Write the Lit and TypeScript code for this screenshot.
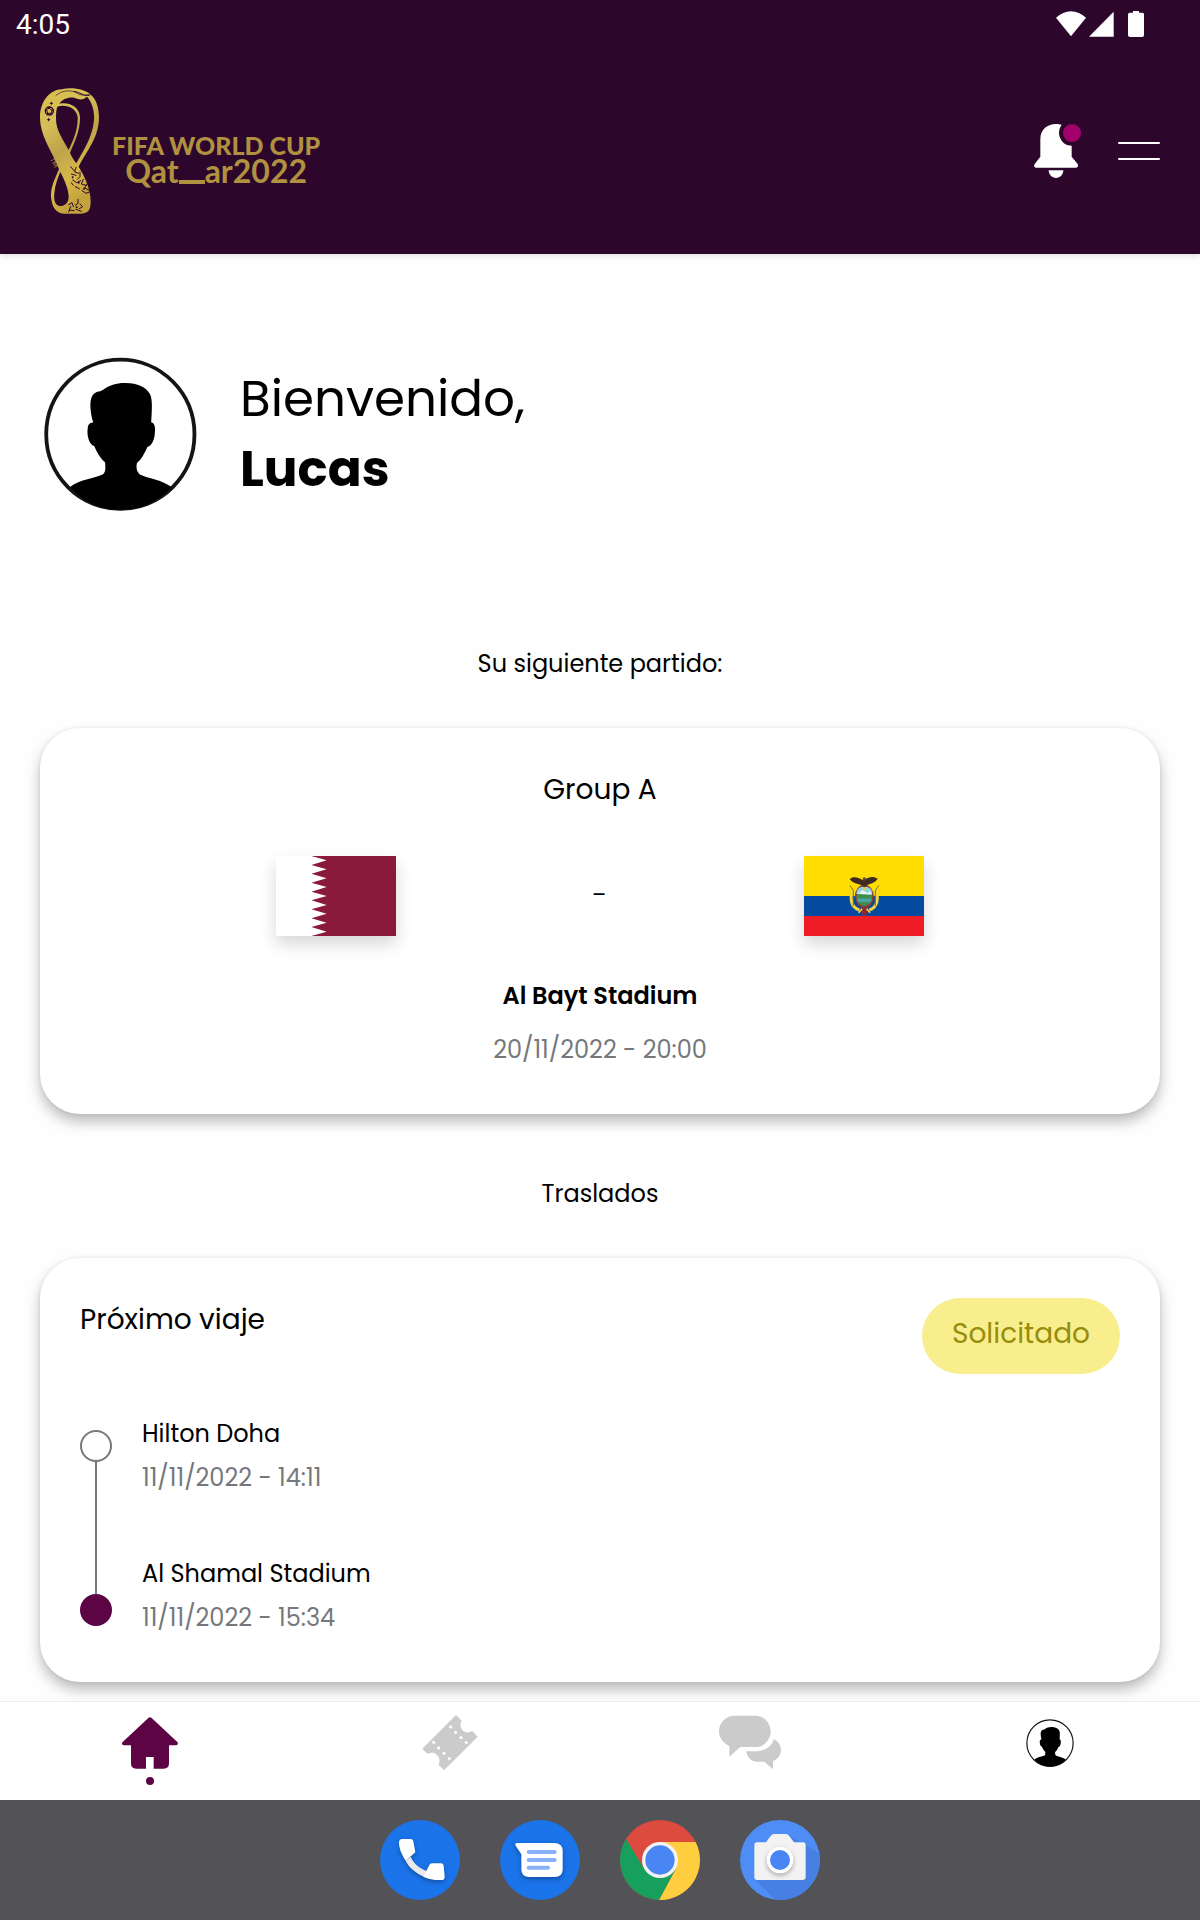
import { LitElement, html, svg, css } from "lit";
import { customElement, property } from "lit/decorators.js";

const PLUM = "#5c0444";
const MUTED = "#cbcbcb";

/* ---------- Status bar ---------- */

@customElement("status-bar")
class StatusBar extends LitElement {
  static styles = css`
    :host {
      display: flex;
      align-items: center;
      justify-content: space-between;
      height: 48px;
      padding: 0 56px 0 16px;
      color: #fff;
      font: 400 28px/48px Roboto, sans-serif;
    }
    time {
      padding-top: 2px;
    }
    .icons {
      display: block;
      width: 88px;
      height: 26px;
      fill: #fff;
    }
  `;
  render() {
    return html`
      <time>4:05</time>
      <svg class="icons" viewBox="168 33 264 78" aria-hidden="true">
        <path d="M168 53C195 27 231 27 258 53L213 109Z" />
        <path d="M267 110L341 35V110Z" />
        <path d="M399 33H417V38H428Q432 39 432 43V106Q431 111 427 111H389Q384 110 384 106V43Q385 38 389 38H399Z" />
      </svg>
    `;
  }
}

/* ---------- Header ---------- */

@customElement("cup-logo")
class CupLogo extends LitElement {
  static styles = css`
    :host {
      display: flex;
      gap: 13px;
      color: #b0913f;
    }
    .emblem {
      display: block;
      width: 59px;
      height: 126px;
    }
    .words {
      display: flex;
      flex-direction: column;
      align-items: center;
      padding-top: 43px;
    }
    .name {
      font: 900 25px/28px Lato, sans-serif;
      white-space: nowrap;
    }
    .host-city {
      display: flex;
      font: 700 32px/24px Lato, sans-serif;
    }
    .stretch {
      width: 26px;
      height: 4px;
      margin-top: 21px;
      background: currentColor;
    }
    .tm {
      font: 400 20px Lato, sans-serif;
      fill: #b0913f;
    }
  `;
  render() {
    return html`
      <svg class="emblem" viewBox="120 264 177 378" aria-hidden="true">
        <defs>
          <linearGradient id="gold" x1="0" y1="0" x2="0.35" y2="1">
            <stop offset="0" stop-color="#d9c04a" />
            <stop offset="0.3" stop-color="#d6bf58" />
            <stop offset="0.55" stop-color="#bfa24a" />
            <stop offset="0.8" stop-color="#d6ba48" />
            <stop offset="1" stop-color="#c3a23c" />
          </linearGradient>
        </defs>
        <path
          fill="url(#gold)"
          fill-rule="evenodd"
          d="M120 352C120 304 150 268 186 268C214 260 258 268 272 284C288 296 297 322 297 352C297 412 262 450 236 500C255 530 272 570 272 604C272 630 266 641 240 641H192C165 640 153 615 153 585C153 560 165 535 177 508C160 460 120 410 120 352Z
             M172 320C195 312 230 322 233 352C234 390 220 420 206 450C190 420 168 392 168 357C168 340 169 328 172 320Z
             M178 311C190 293 216 287 234 297C248 301 256 294 261 290C275 305 284 330 282 360C278 410 250 452 229 490C222 482 214 468 210 458C225 425 241 390 240 350C237 318 205 305 178 311Z
             M181 516C196 545 206 570 206 592C205 612 190 620 178 618C165 614 161 600 163 580C165 555 173 535 181 516Z"
        />
        <g fill="none" stroke="#2d062c" stroke-linecap="round">
          <path stroke-width="2" d="M168 286C190 268 216 270 232 280C246 288 258 286 270 282" />
          <path stroke-width="3" d="M222 274C240 276 250 290 268 286" />
          <circle cx="148" cy="333" r="12" stroke-width="4" />
          <path stroke-width="3" d="M148 325L156 331L153 340H143L140 331ZM148 321V325M160 329L156 331M155 345L153 340M141 345L143 340M136 329L140 331" />
          <path
            stroke-width="3"
            d="M212 500L222 512M228 502L224 516L236 520M214 522L228 526M240 516V530L232 538M218 540L230 548L242 542M250 538L244 552L258 556M226 560L238 566M262 550L254 564L266 570M246 572L258 580L268 576M214 548L220 556"
          />
          <path stroke-width="3" d="M206 614L216 608L220 620M234 598V610L226 616M208 630L222 632M240 612L248 620L238 626M228 628L244 634M212 620L206 636" />
        </g>
        <g fill="#2d062c">
          <path d="M154 304L156 308L160 310L156 312L154 316L152 312L148 310L152 308Z" />
          <path d="M146 353L148 357L152 359L148 361L146 365L144 361L140 359L144 357Z" />
          <circle cx="236" cy="548" r="3" />
          <circle cx="218" cy="532" r="3" />
          <circle cx="252" cy="566" r="3" />
          <circle cx="230" cy="622" r="3" />
        </g>
        <text class="tm" transform="translate(149 478) rotate(62)">TM</text>
      </svg>
      <div class="words">
        <span class="name">FIFA WORLD CUP</span>
        <span class="host-city"><span>Qat</span><i class="stretch"></i><span>ar2022</span></span>
      </div>
    `;
  }
}

@customElement("app-header")
class AppHeader extends LitElement {
  static styles = css`
    :host {
      display: block;
      background: #2d062c;
      box-shadow: 0 2px 6px rgba(0, 0, 0, 0.12);
    }
    .bar {
      display: flex;
      align-items: center;
      justify-content: space-between;
      padding: 40px;
    }
    .actions {
      display: flex;
      align-items: center;
      gap: 37px;
    }
    button {
      display: block;
      padding: 0;
      border: 0;
      background: none;
    }
    svg {
      display: block;
    }
    .bell {
      width: 47px;
      height: 54px;
    }
    .menu {
      width: 42px;
      height: 18px;
    }
  `;
  render() {
    return html`
      <status-bar></status-bar>
      <div class="bar">
        <cup-logo></cup-logo>
        <div class="actions">
          <button aria-label="Notificaciones">
            <svg class="bell" viewBox="102 372 141 162" aria-hidden="true">
              <path
                fill="#fff"
                d="M121 417C121 388 143 372 168 372C175 372 180 373 185 375C175 388 175 404 182 417C188 430 200 437 215 437V470L233 492C236 498 233 503 228 503H108C102 503 101 497 104 492L121 470Z"
              />
              <path fill="#fff" d="M146 511H190C190 524 180 534 168 534S146 524 146 511Z" />
              <circle cx="216" cy="399" r="27" fill="#a2006c" />
            </svg>
          </button>
          <button aria-label="Menú">
            <svg class="menu" viewBox="0 0 42 18" aria-hidden="true">
              <path stroke="#fff" stroke-width="2" stroke-linecap="round" d="M1 1H41M1 17H41" />
            </svg>
          </button>
        </div>
      </div>
    `;
  }
}

/* ---------- Avatar ---------- */

const avatarShape = svg`
  <ellipse cx="290" cy="282" rx="214" ry="224" fill="#fff" stroke="#141414" stroke-width="11" />
  <path d="M205 215C202 188 203 166 218 157C224 152 234 154 240 148C258 135 278 128 302 128C338 127 364 140 375 160C384 175 381 215 379 246C390 249 392 262 389 285C386 305 378 318 368 320C360 340 350 358 338 368C335 380 337 396 348 403C375 416 410 418 438 440C400 485 350 508 290 508C230 508 183 485 145 440C170 418 215 415 240 402C250 394 246 375 246 366C232 355 222 335 215 318C200 312 192 285 196 262C197 250 206 247 212 246C208 235 206 225 205 215Z" />
`;

/* ---------- Match card ---------- */

const serratedEdge = Array.from({ length: 9 }, (_, i) => {
  const step = 240 / 9;
  return `L152 ${Math.round((i + 0.5) * step)}L106 ${Math.round((i + 1) * step)}`;
}).join("");

const qatarFlag = svg`
  <rect width="360" height="240" fill="#fff" />
  <path fill="#8a1a3b" d="M106 0${serratedEdge}V240H360V0Z" />
`;

const ecuadorFlag = svg`
  <rect width="360" height="240" fill="#fd0" />
  <rect y="120" width="360" height="60" fill="#044a9f" />
  <rect y="180" width="360" height="60" fill="#ee1c25" />
  <g transform="translate(-102 -108)">
    <path fill="none" stroke="#f6d63a" stroke-width="9" d="M247 206C240 235 242 262 268 270M317 206C326 235 324 262 298 270" />
    <path fill="none" stroke="#7a7030" stroke-width="3" d="M240 196L250 212V258M326 196L316 212V258" />
    <path fill="#8a2a30" d="M272 260H296L288 288H278Z" />
    <path fill="none" stroke="#f6d63a" stroke-width="5" d="M266 278L276 266M300 278L290 266" />
    <ellipse cx="283" cy="229" rx="26" ry="32" fill="#3c8f4c" stroke="#8c3a3a" stroke-width="5" />
    <path fill="#8fd4e6" d="M259 222C260 205 270 200 283 200S306 205 307 222Z" />
    <path fill="#e9f4ee" d="M264 222L278 210L292 220L300 214L306 224Z" />
    <path fill="#4aa6a4" d="M260 236H306L302 246H264Z" />
    <circle cx="283" cy="206" r="5" fill="#f4c92b" />
    <path fill="#3f2a22" d="M239 177C253 166 268 176 280 181C294 172 308 166 323 176C314 190 302 190 292 195L283 202L274 195C260 191 247 189 239 177Z" />
    <circle cx="283" cy="177" r="5" fill="#5a4a42" />
  </g>
`;

/* ---------- Navigation and dock icons ---------- */

const homeIcon = svg`
  <svg viewBox="114 102 192 216">
    <g fill=${PLUM}>
      <path d="M205 114Q210 109 215 114L292 186Q297 194 288 196H267V250Q267 266 251 266H221V231H198V266H168Q153 266 153 250V196H132Q122 194 128 186Z" />
      <circle cx="210" cy="303" r="12" />
    </g>
  </svg>
`;

const ticketIcon = svg`
  <svg viewBox="1014 102 192 216">
    <path fill=${MUTED} d="M1128 105L1145 122C1139 133 1141 144 1149 152C1157 159 1167 159 1177 153L1193 170L1092 271L1076 255C1081 243 1079 231 1070 224C1062 217 1052 217 1043 222L1027 206Z" />
    <path stroke="#fff" stroke-width="8" d="M1109 138L1115 144M1124 154L1130 160M1140 170L1146 176M1156 185L1162 191M1058 184L1064 190M1073 201L1079 207M1089 217L1095 223M1105 233L1111 239" />
  </svg>
`;

const chatIcon = svg`
  <svg viewBox="114 102 192 216">
    <g fill=${MUTED}>
      <path d="M163 107H227C252 107 272 129 272 154C272 180 252 201 227 201H181L148 230V198C130 190 117 174 117 154C117 128 138 107 163 107Z" />
      <path d="M281 178C295 183 303 196 303 211C303 226 293 238 279 243V268L253 245H232C215 245 203 235 198 214H228C255 213 276 200 281 178Z" />
    </g>
  </svg>
`;

const profileIcon = svg`
  <svg viewBox="0 0 64 72">
    <svg x="8" y="5" width="48" height="48" viewBox="68 50 444 462" preserveAspectRatio="none">${avatarShape}</svg>
  </svg>
`;

const navLinks = [
  { label: "Inicio", icon: homeIcon },
  { label: "Entradas", icon: ticketIcon },
  { label: "Mensajes", icon: chatIcon },
  { label: "Perfil", icon: profileIcon },
];

const dockApps = [
  {
    label: "Teléfono",
    icon: svg`
      <svg viewBox="60 60 240 240">
        <circle cx="180" cy="180" r="120" fill="#1a73e8" />
        <g class="lifted">
          <path fill="#e9e9e9" d="M137 182L152 170C160 190 180 207 204 214L192 230C165 218 145 200 137 182Z" />
          <path fill="#fff" d="M125 117H153Q159 118 160 124L166 157L137 182C121 157 116 137 117 125Q118 117 125 117Z" />
          <path fill="#fff" d="M190 230L208 195Q210 190 216 190H244Q251 191 251 198L254 230Q254 240 244 240C225 241 205 237 190 230Z" />
        </g>
      </svg>`,
  },
  {
    label: "Mensajes de texto",
    icon: svg`
      <svg viewBox="420 60 240 240">
        <circle cx="540" cy="180" r="120" fill="#1a73e8" />
        <path class="lifted" fill="#fff" d="M470 129H585Q608 131 608 153V210Q606 231 585 231H505Q484 230 484 208V163L467 137Q464 130 470 129Z" />
        <path stroke="#8ab0f5" stroke-width="12" stroke-linecap="round" d="M506 156H584M506 180H584M506 203H564" />
      </svg>`,
  },
  {
    label: "Chrome",
    icon: svg`
      <svg viewBox="780 60 240 240">
        <circle cx="900" cy="180" r="120" fill="#dc4b3e" />
        <path fill="#ffcd40" d="M900 126H1007A120 120 0 0 1 897 300L947 207Z" />
        <path fill="#17a05d" d="M798 117A120 120 0 0 0 897 300L947 207L900 180L853 207Z" />
        <circle cx="900" cy="180" r="54" fill="#f3f3f3" />
        <circle cx="900" cy="180" r="44" fill="#4a86f3" />
      </svg>`,
  },
  {
    label: "Cámara",
    icon: svg`
      <svg viewBox="1140 60 240 240">
        <circle cx="1260" cy="180" r="120" fill="#4f8df6" />
        <path fill="#4780e2" d="M1288 106L1378 160A120 120 0 0 1 1246 299L1186 239Z" />
        <path fill="#f2f2f2" d="M1190 127H1218L1232 108Q1236 102 1243 102H1277Q1284 102 1288 108L1302 127H1330Q1337 128 1337 135V232Q1336 240 1328 240H1191Q1183 239 1183 231V134Q1183 128 1190 127Z" />
        <circle class="lifted" cx="1260" cy="180" r="40" fill="#fff" />
        <circle cx="1260" cy="180" r="30" fill="#4a86f3" />
      </svg>`,
  },
];

@customElement("bottom-nav")
class BottomNav extends LitElement {
  static styles = css`
    :host {
      display: block;
      position: relative;
      background: #fff;
      border-top: 1px solid #eee;
    }
    nav {
      display: grid;
      grid-template-columns: repeat(4, 1fr);
      padding: 12px 0 14px;
      justify-items: center;
    }
    a,
    .icon {
      display: block;
      width: 64px;
      height: 72px;
    }
  `;
  render() {
    return html`
      <nav aria-label="Principal">
        ${navLinks.map(
          (link) => html`<a href="#" aria-label=${link.label}><svg class="icon" aria-hidden="true">${link.icon}</svg></a>`
        )}
      </nav>
    `;
  }
}

@customElement("app-dock")
class AppDock extends LitElement {
  static styles = css`
    :host {
      display: flex;
      justify-content: center;
      gap: 40px;
      padding: 20px 0;
      background: #535257;
    }
    button {
      display: block;
      padding: 0;
      border: 0;
      background: none;
    }
    .icon {
      display: block;
      width: 80px;
      height: 80px;
    }
    .lifted {
      filter: drop-shadow(0 6px 6px rgba(0, 0, 0, 0.3));
    }
  `;
  render() {
    return dockApps.map(
      (app) => html`<button aria-label=${app.label}><svg class="icon" aria-hidden="true">${app.icon}</svg></button>`
    );
  }
}

/* ---------- Trip timeline ---------- */

interface Stop {
  place: string;
  time: string;
}

@customElement("trip-timeline")
class TripTimeline extends LitElement {
  @property({ attribute: false }) stops: Stop[] = [];

  static styles = css`
    :host {
      display: flex;
      gap: 30px;
    }
    .rail {
      display: flex;
      flex-direction: column;
      align-items: center;
      padding: 14px 0 10px;
    }
    .dot {
      box-sizing: border-box;
      width: 32px;
      height: 32px;
      border: 2px solid #75787c;
      border-radius: 50%;
    }
    .dot.end {
      border-color: #5c0444;
      background: #5c0444;
    }
    .line {
      flex: 1;
      width: 2px;
      background: #75787c;
    }
    .stops {
      display: flex;
      flex-direction: column;
      gap: 60px;
      margin: 0;
      padding: 0;
      list-style: none;
    }
    .stop {
      display: flex;
      flex-direction: column;
      gap: 8px;
    }
    .time {
      color: #75787c;
    }
  `;
  render() {
    return html`
      <div class="rail" aria-hidden="true">
        <span class="dot"></span><span class="line"></span><span class="dot end"></span>
      </div>
      <ol class="stops">
        ${this.stops.map(
          (s) => html`<li class="stop"><span>${s.place}</span><span class="time">${s.time}</span></li>`
        )}
      </ol>
    `;
  }
}

/* ---------- Page ---------- */

@customElement("app-root")
class AppRoot extends LitElement {
  private stops: Stop[] = [
    { place: "Hilton Doha", time: "11/11/2022 - 14:11" },
    { place: "Al Shamal Stadium", time: "11/11/2022 - 15:34" },
  ];

  static styles = css`
    :host {
      display: flex;
      flex-direction: column;
      min-height: 100vh;
      background: #fefefe;
      color: #000;
      font: 400 24px/36px Poppins, Inter, sans-serif;
    }
    main {
      flex: 1;
      padding: 0 40px 18px;
    }
    h1,
    h2,
    h3,
    p {
      margin: 0;
      font-size: inherit;
      font-weight: inherit;
    }
    .welcome {
      display: flex;
      align-items: center;
      gap: 40px;
      padding: 103px 0 135px;
    }
    .avatar {
      display: block;
      width: 160px;
      height: 154px;
    }
    .greeting {
      display: flex;
      flex-direction: column;
      font-size: 50px;
      line-height: 70px;
    }
    .user {
      font-weight: 700;
    }
    .section-title {
      text-align: center;
      margin-bottom: 46px;
    }
    .card {
      padding: 40px 40px 46px;
      border-radius: 40px;
      background: #fff;
      box-shadow: 0 8px 14px rgba(0, 0, 0, 0.26), 0 0 4px rgba(0, 0, 0, 0.07);
    }
    .card + .section-title {
      margin-top: 62px;
    }
    .card-title {
      font-size: 28px;
      line-height: 44px;
    }
    .match {
      text-align: center;
    }
    .teams {
      display: flex;
      align-items: center;
      justify-content: space-evenly;
      padding: 44px 0 42px;
    }
    .flag {
      display: block;
      width: 120px;
      height: 80px;
      box-shadow: 0 8px 16px rgba(0, 0, 0, 0.16);
    }
    .score {
      font-size: 28px;
      font-weight: 300;
    }
    .stadium {
      font-weight: 600;
      margin-bottom: 18px;
    }
    .date {
      color: #75787c;
    }
    .trip-head {
      display: flex;
      align-items: flex-start;
      justify-content: space-between;
      margin-bottom: 42px;
    }
    .badge {
      padding: 14px 30px 18px;
      border-radius: 40px;
      background: #f9ee8e;
      color: #968d0c;
      font-size: 28px;
      line-height: 44px;
    }
  `;

  render() {
    return html`
      <app-header></app-header>
      <main>
        <section class="welcome">
          <svg class="avatar" viewBox="58 50 462 462" preserveAspectRatio="none" role="img" aria-label="Lucas">${avatarShape}</svg>
          <h1 class="greeting"><span>Bienvenido,</span><span class="user">Lucas</span></h1>
        </section>

        <h2 class="section-title">Su siguiente partido:</h2>
        <article class="card match">
          <h3 class="card-title">Group A</h3>
          <div class="teams">
            <svg class="flag" viewBox="0 0 360 240" role="img" aria-label="Qatar">${qatarFlag}</svg>
            <span class="score">-</span>
            <svg class="flag" viewBox="0 0 360 240" role="img" aria-label="Ecuador">${ecuadorFlag}</svg>
          </div>
          <p class="stadium">Al Bayt Stadium</p>
          <p class="date">20/11/2022 - 20:00</p>
        </article>

        <h2 class="section-title">Traslados</h2>
        <article class="card">
          <div class="trip-head">
            <h3 class="card-title">Próximo viaje</h3>
            <span class="badge">Solicitado</span>
          </div>
          <trip-timeline .stops=${this.stops}></trip-timeline>
        </article>
      </main>
      <bottom-nav></bottom-nav>
      <app-dock></app-dock>
    `;
  }
}
